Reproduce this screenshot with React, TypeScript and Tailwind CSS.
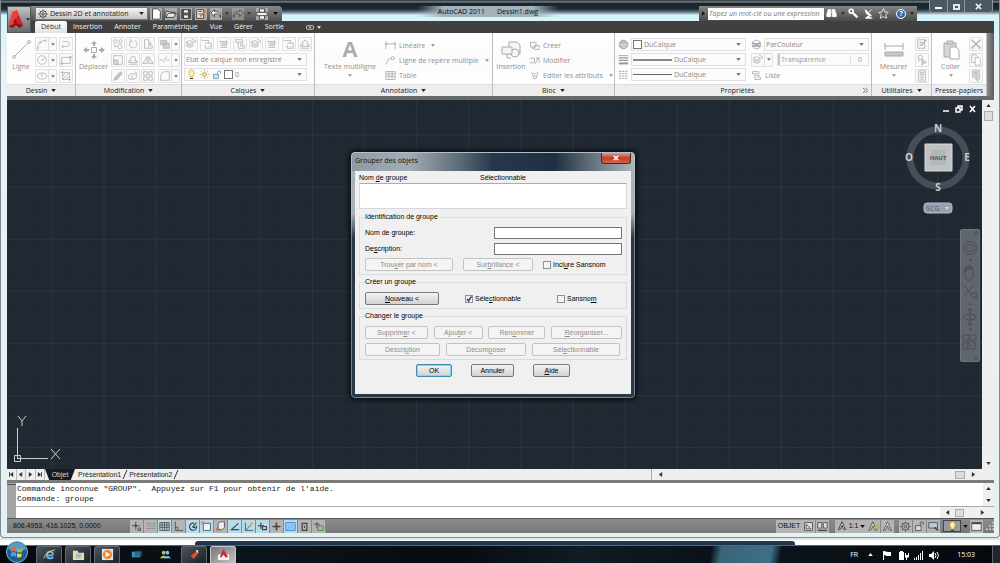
import { ReactNode } from "react";
import clsx from "clsx";

// Every glyph is drawn on a 14x14 grid
const glyphs: Record<string, ReactNode> = {
  arc: <><path d="M2 12C2 6 6 3 11 3" /><circle cx="2" cy="12" r="1" /><circle cx="11" cy="3" r="1" /><circle cx="5" cy="5" r="1" /></>,
  circle: <><circle cx="7" cy="7" r="5" /><path d="M7 7l3-2M6 7h2" /></>,
  ellipse: <><ellipse cx="7" cy="7" rx="5.500" ry="3.500" /><path d="M7 4v3M6 7h2" /></>,
  polyline: <><path d="M3 4h5a3 3 0 0 1 0 6H2" /><path d="M4 8L2 10l2 2" /></>,
  rect: <><path d="M2 4h10v7H2z" /><path d="M1 10h2v2H1zM11 3h2v2h-2z" /></>,
  hatch: <><path d="M3 3h8v8H3zM3 7l4-4M3 11l8-8M7 11l4-4" /><path d="M1 3h2M3 1v2M11 11h2M11 11v2" /></>,
  copy: <><circle cx="4" cy="4" r="2" /><circle cx="10" cy="4" r="2" /><circle cx="9" cy="10" r="2.500" /><path d="M3 7v3h3" /></>,
  rotate: <><path d="M4 4a4.500 4.500 0 1 0 5-1" /><path d="M4 1v3h3" /></>,
  stretch: <><path d="M3 2h5v10H3zM8 6l4 3v3H8" /><path d="M10 4v5" /></>,
  scale: <><path d="M2 2h10v10H2z" /><path d="M2 7h5v5H2z" fill="#d9d9d9" /></>,
  offset: <><path d="M2 10h10V8H9a3 3 0 1 0-4 0H2zM2 12h10" /></>,
  mirror: <><path d="M6 3v8H1zM8 3v8h5z" /></>,
  erase: <><path d="M2 12l4-1 6-7-2-2-6 6z" fill="#c4c4c4" /></>,
  explode: <><path d="M2 6l4-2 5 1v4l-4 2-5-1zM6 6v5M9 2l3 2" /></>,
  array: <><path d="M2 2h4v4H2zM8 2h4v4H8zM2 8h4v4H2zM8 8h4v4H8z" /></>,
  trim: <><path d="M2 3h7v5H2zM5 6h7v6H5z" fill="#d4d4d4" /></>,
  extend: <><path d="M1 7h4M9 7h4M5 10l4-7" /></>,
  fillet: <><path d="M2 12V7a5 5 0 0 1 5-5h5v10z" /></>,
  layers: <><path d="M1 5l4-2 5 2-4 2zM1 7l5 2 4-2M1 9l5 2 4-2" /><path d="M8 1l4 2v3" /></>,
  layers2: <><path d="M2 4h7l2 2H4zM3 7h8M3 9h8M3 11h8" /><path d="M10 2v3" /></>,
  layers3: <><path d="M1 3h8v3h3v6H5V8" /><path d="M5 6h4M10 9l-2 2" /></>,
  dimension: <><path d="M1 2v10M13 2v10M1 5h12M3 4L1 5l2 1M11 4l2 1-2 1" /></>,
  leader: <><path d="M1 12L5 5h3" /><circle cx="10" cy="4" r="2" /></>,
  table: <><path d="M1 2h12v10H1zM1 5h12M5 2v10M9 2v10M1 8h12" /></>,
  create: <><path d="M2 3h7v6H2zM7 7h6v5H7z" /><path d="M4 9v2h2" /></>,
  edit: <><path d="M1 4h6v6H1M8 11l1-2 3-6M9 4h4v6" /></>,
  attribute: <><path d="M2 2l3 3h4l3-3M4 5l2 6h3l2-6M6 8h4" /></>,
  sphere: <><circle cx="7" cy="7" r="5.500" fill="#bdbdbd" /><path d="M2 7h10M4 10h6" stroke="#eee" /></>,
  weights: <><path d="M1 2h12" /><path d="M1 5h12M1 8h12" strokeWidth="1.500" /><path d="M1 12h12" strokeWidth="2.500" /></>,
  dashes: <><path d="M1 3h12M1 6h12M1 9h12M1 12h12" strokeDasharray="3 1" /></>,
  globe: <><circle cx="7" cy="7" r="5.500" /><path d="M2 5c3 2 7 2 10 0M2 9h10" strokeWidth="2" /></>,
  list: <><path d="M2 2h8v3H5v7h7V9H7M2 2v3h3M7 7h4" /></>,
  select: <><path d="M2 2h8v10H2z" /><path d="M6 9l6-7M4 5h3M4 8h2" strokeWidth="1.500" /></>,
  pick: <><circle cx="5" cy="4" r="2.500" /><path d="M7 6l5 4-3 1-2 2zM2 8h3" fill="#d0d0d0" /></>,
  calc: <><path d="M3 1h8v12H3zM5 3h4v2H5zM5 7h4M5 9h4M5 11h4" /></>,
  cut: <><path d="M2 2l9 9M12 2l-9 9" strokeWidth="1.500" /><circle cx="3" cy="11" r="1.500" /><circle cx="11" cy="11" r="1.500" /></>,
  pages: <><path d="M2 1h5l2 2v7H2z" /><path d="M6 4h4l2 2v7H6z" fill="#fff" /></>,
  match: <><path d="M3 1h8v7H3zM5 3h4M5 5h4M8 8v3M5 9l4 4 3-4" fill="#ddd" /></>,
  file: <path d="M3 1h6l3 3v9H3z" fill="#fff" />,
  folder: <path d="M1 11V4h4l1 1h5v2M1 11l3-5h9l-3 5z" fill="#e8e8e8" />,
  save: <><path d="M2 2h10v10H2z" fill="#555" /><path d="M4 2h6v4H4zM4 8h6v4H4z" fill="#eee" /></>,
  saveAs: <><path d="M2 2h8v10H2z" fill="#eee" /><path d="M4 4h4M4 7h4" /><path d="M6 10l6-7" stroke="#c9812a" strokeWidth="2" /></>,
  undo: <path d="M5 2L1 6l4 4V7c4-1 6 0 7 4 1-5-2-7-7-7z" fill="#fff" />,
  redo: <path d="M9 2l4 4-4 4V7C5 6 3 7 2 11 1 6 4 4 9 4z" fill="#bbb" />,
  print: <><path d="M4 1h6v4H4zM4 8h6v5H4z" fill="#fff" /><path d="M1 5h12v4H1z" fill="#f2f2f2" /></>,
  gear: <><circle cx="7" cy="7" r="4.500" /><circle cx="7" cy="7" r="1.800" /><path d="M7 .5v2M7 11.500v2M.5 7h2M11.500 7h2M2.400 2.400l1.500 1.500M10.100 10.100l1.500 1.500M11.600 2.400l-1.500 1.500M3.900 10.100l-1.500 1.500" /></>,
  binoculars: <><path d="M3 2h3v9H1V8zM8 2h3l2 6v3H8z" fill="currentColor" /><path d="M6 5h2" /></>,
  key: <><circle cx="4" cy="4" r="2.500" strokeWidth="2" /><path d="M6 6l6 6" strokeWidth="3" /></>,
  dish: <><path d="M3 2c0 5 3 8 8 8zM7 6l4-4M7 10l-4 3h9" fill="currentColor" /></>,
  star: <path d="M7 1l2 4 4 .5-3 3 1 4.500-4-2-4 2 1-4.500-3-3L5 5z" />,
  snap: <><path d="M6 1v10M1 6h10M5 5h2v2H5z" /><path d="M9 9h3v3H9z" /></>,
  dots: <path d="M3 3v9M6 3v9M9 3v9M12 3v9" strokeDasharray="1 2" />,
  grid: <path d="M1 2h12v10H1zM1 5h12M1 8h12M4 2v10M7 2v10M10 2v10" />,
  ortho: <path d="M3 1v11h10M3 8h3v4" />,
  polar: <><path d="M12 6a4.500 4.500 0 1 1-3-3M7 8l5-6M7 8h4" strokeWidth="1.500" /></>,
  osnap: <><path d="M3 3h9v9H3z" fill="#eef6f9" /><path d="M1 1h3v3H1z" fill="#e8a080" stroke="#c77" /></>,
  osnap3: <><path d="M4 3l3-2h5v7l-3 3H4z" fill="#eee" /><path d="M2 9h3v3H2z" stroke="#b86a48" /></>,
  track: <path d="M12 3L3 11h10" strokeWidth="1.500" />,
  ducs: <><path d="M3 2v10h10M3 12l7-7" /><circle cx="11" cy="3" r="1.500" fill="#e3b04c" stroke="#e3b04c" /></>,
  dyn: <path d="M5 2v8M1 6h8M7 7h5v4H7z" strokeWidth="1.500" />,
  plus: <path d="M7 2v10M2 7h10" strokeWidth="2" />,
  fill: <><path d="M1 2h12v10H1z" fill="#9fd0ff" stroke="#2f7bd0" /><path d="M1 6h12M1 9h12M5 2v10M9 2v10" stroke="#5ba3e8" strokeDasharray="1 1" /></>,
  quick: <path d="M3 3h8M4 3v9h6V3M7 6v3" strokeWidth="1.500" />,
  cycle: <><path d="M5 1v8M1 4h8" /><path d="M6 6h7v6H6z" fill="#8fc58b" stroke="#3f7f3c" /></>,
  model: <><path d="M2 2h10v10H2z" fill="#ddd" /><path d="M4 4v6h6z" /></>,
  split: <><path d="M1 2h5v7H1zM8 2h5v7H8z" fill="#ddd" /><path d="M1 12h12" strokeWidth="1.500" /></>,
  anno: <path d="M7 1L2 12l3-1 2-5 2 5 3 1z" fill="#e6e6e6" />,
  annoOn: <><path d="M6 1L1 12l3-1 2-5 2 5 3 1z" fill="#e6e6e6" /><circle cx="11" cy="8" r="2" fill="#f0c24f" stroke="#b98a20" /></>,
  lock: <><path d="M2 6h7v6H2z" fill="#ddd" /><path d="M8 6V3a2 2 0 0 1 4 0v2" /></>,
  perf: <><path d="M1 2h11v7H1z" fill="#bcd" /><path d="M8 8l5 4" strokeWidth="2" /></>,
  bulb: <><path d="M7 1a4 4 0 0 1 2 7v2H5V8a4 4 0 0 1 2-7z" fill="#fff2a8" stroke="#c9a94c" /><path d="M5 12h4" /></>,
  sun: <><circle cx="7" cy="7" r="2.500" fill="#ffe9a8" /><path d="M7 1v2M7 11v2M1 7h2M11 7h2M3 3l1 1M10 10l1 1M11 3l-1 1M3 11l1-1" /></>,
  frame: <><path d="M1 2h12v10H1z" fill="#eee" /><path d="M1 3h12" strokeWidth="2" /></>,
};

const Glyph = ({ name, className }: { name: string; className?: string }) => (
  <svg viewBox="0 0 14 14" fill="none" stroke="currentColor" className={clsx("shrink-0", className ?? "size-[12px]")}>
    {glyphs[name]}
  </svg>
);

const Caret = ({ className }: { className?: string }) => (
  <svg viewBox="0 0 6 4" className={clsx("h-[3px] shrink-0", className ?? "w-[5px]")} fill="currentColor">
    <path d="M0 0h6L3 4z" />
  </svg>
);

const Tool = ({ name, split }: { name: string; split?: boolean }) => (
  <button aria-label={name} className="flex h-[14px] items-center rounded-[1px] border border-[#e0e0e0] bg-[#fafafa] text-[#b4b4b4]">
    <Glyph name={name} />
    {split && (
      <span className="flex h-full w-[8px] items-center justify-center border-l border-[#e0e0e0] text-[#777]">
        <Caret className="w-[4px]" />
      </span>
    )}
  </button>
);

const Panel = ({ title, caret = true, launcher, className, children }: { title: string; caret?: boolean; launcher?: boolean; className: string; children: ReactNode }) => (
  <section className={clsx("flex flex-col border-r border-[#bdbdbd]", className)}>
    <div className="flex h-[51px] items-start bg-gradient-to-b from-white via-[#fbfbfb] to-white pt-1">{children}</div>
    <div className="flex h-[12px] items-center border-t border-[#dcdcdc] bg-[#ededed] text-[#222]">
      <button className="flex flex-1 items-center justify-center gap-1">
        {title}
        {caret && <Caret />}
      </button>
      {launcher && (
        <button aria-label="Palette" className="px-[3px]">
          <svg viewBox="0 0 6 6" className="size-[5px]" fill="none" stroke="#666"><path d="M0 0l3 3-3 3M3 0l3 3-3 3" /></svg>
        </button>
      )}
    </div>
  </section>
);

const Combo = ({ label, value, className, before }: { label: string; value: string; className?: string; before?: ReactNode }) => (
  <div className={clsx("flex h-[13px] items-center gap-[2px] border border-[#e0e0e0] bg-[#fbfbfb] pr-1 pl-px", className)}>
    {before}
    <select aria-label={label} className="h-full min-w-0 flex-1 appearance-none bg-transparent text-[#888]">
      <option>{value}</option>
    </select>
    <Caret className="w-[5px] text-[#777]" />
  </div>
);

const RibbonLink = ({ name, text, caret }: { name: string; text: string; caret?: boolean }) => (
  <button className="flex h-[15px] items-center gap-[3px] text-[#8f8f8f]">
    <Glyph name={name} className="size-[11px] text-[#a8a8a8]" />
    {text}
    {caret && <Caret className="ml-[3px] w-[4px]" />}
  </button>
);

const BigTool = ({ text, caret, className, children }: { text: string; caret?: boolean; className: string; children: ReactNode }) => (
  <button className={clsx("flex flex-col items-center text-[#8f8f8f]", className)}>
    <span className="flex h-[25px] items-center justify-center">{children}</span>
    <span className="leading-[10px] whitespace-nowrap">{text}</span>
    {caret && <Caret className="mt-[2px] w-[4px]" />}
  </button>
);

const tabs = ["Début", "Insertion", "Annoter", "Paramétrique", "Vue", "Gérer", "Sortie"];

function TitleBar() {
  return (
    <div className="flex h-[33px]">
      <button aria-label="Menu de l'application" className="mt-[6px] flex w-[24px] items-center gap-[2px] border border-[#555] bg-gradient-to-b from-[#c2c2c2] to-[#6a6a6a]">
        <svg viewBox="0 0 18 24" className="h-[24px] w-[16px]">
          <path d="M5 3l5-2 7 17-4 3-3-6-4 1-1 5-4-2z" fill="#d3202a" />
          <path d="M5 3l5-2 1 6-5 9-1 5-4-2z" fill="#ee4038" />
          <path d="M8 10l2 4-4 2z" fill="#7d0f14" />
          <path d="M1 19l8-4 8 3-4 3-4-3-4 3z" fill="#8f1218" />
        </svg>
        <Caret className="w-[4px] text-[#222]" />
      </button>
      <div className="flex min-w-0 flex-1 flex-col">
        <div className="flex h-[21px] items-start">
          <div className="mt-[6px] flex h-[15px] items-center rounded-tr-sm bg-gradient-to-b from-[#8b8b8b] to-[#505050] pr-1 pl-[4px] text-white">
            <div className="flex h-[13px] w-[113px] items-center gap-[2px] border border-[#777] bg-gradient-to-b from-[#f4f4f4] to-[#c6c6c6] pr-[3px] pl-[2px] text-[#222]">
              <Glyph name="gear" className="size-[10px]" />
              <select aria-label="Espace de travail" className="min-w-0 flex-1 appearance-none bg-transparent">
                <option>Dessin 2D et annotation</option>
              </select>
              <Caret />
            </div>
            <div className="flex items-center gap-[3px] pl-[2px] text-[#333]">
              {["file", "folder", "save", "saveAs", "undo"].map((n) => (
                <button key={n} aria-label={n} className="flex size-[12px] bg-[#a9a9a9]"><Glyph name={n} /></button>
              ))}
              <Caret className="w-[4px]" />
              <button aria-label="redo" className="flex size-[12px] bg-[#a9a9a9] opacity-60"><Glyph name="redo" /></button>
              <Caret className="w-[4px]" />
              <button aria-label="print" className="ml-[2px] flex size-[12px] bg-[#a9a9a9]"><Glyph name="print" /></button>
              <Caret className="ml-[2px] w-[5px] text-black" />
            </div>
          </div>
          <p className="flex flex-1 justify-center pt-[6px] pr-[5px] leading-[11px] text-[#0a0d10]">
            <span className="flex gap-3 bg-[linear-gradient(90deg,transparent,#a3b3bc_18%,#a3b3bc_82%,transparent)] px-5">
              <span>AutoCAD 2011</span>
              <span>Dessin1.dwg</span>
            </span>
          </p>
          <div className="mt-[6px] flex h-[15px] w-[218px] items-center bg-gradient-to-b from-[#858585] to-[#4a4a4a] text-white">
            <svg viewBox="0 0 4 6" className="mx-[3px] h-[5px] w-[3px]"><path d="M0 0v6l4-3z" fill="#111" /></svg>
            <input aria-label="Recherche" placeholder="Tapez un mot-clé ou une expression" className="h-[12px] w-[116px] shrink-0 bg-white px-px italic placeholder:text-[#777]" />
            <div className="flex flex-1 items-center justify-between pr-[3px] pl-[2px]">
              <Glyph name="binoculars" className="size-[11px]" />
              <Caret className="w-[4px] text-[#222]" />
              <Glyph name="key" className="size-[11px]" />
              <Glyph name="dish" className="size-[11px]" />
              <Glyph name="star" className="size-[11px]" />
              <span className="ml-1 flex size-[10px] items-center justify-center rounded-full border border-white bg-[#3a68b0] font-bold">?</span>
              <Caret className="w-[4px] text-[#222]" />
            </div>
          </div>
          <div className="mr-[1px] ml-[12px] flex h-[13px] overflow-hidden rounded-b-sm border border-t-0 border-[#8d979c] text-white">
            <button aria-label="Réduire" className="flex w-[18px] items-end justify-center border-r border-[#8d979c] bg-[#4a5962] pb-[3px]"><span className="h-[2px] w-[7px] bg-white" /></button>
            <button aria-label="Agrandir" className="flex w-[17px] items-center justify-center border-r border-[#8d979c] bg-[#4a5962] pt-px"><span className="h-[6px] w-[7px] border-2 border-[#dfe6ea]" /></button>
            <button aria-label="Fermer" className="flex w-[27px] items-center justify-center bg-[#4a5962] pt-px">
              <svg viewBox="0 0 8 8" className="size-[7px]" stroke="#e6ecef" strokeWidth="2"><path d="M1 1l6 6M7 1L1 7" /></svg>
            </button>
          </div>
        </div>
        <nav className="flex h-[12px] items-center bg-[#404040] pl-[4px] text-[#f4f4f4]">
          {tabs.map((tab, i) => (
            <button
              key={tab}
              className={clsx("h-[12px] px-[6px]", i === 0 && "rounded-t-[2px] bg-gradient-to-b from-[#fdfdfd] to-[#e2e2e2] text-[#333]")}
            >
              {tab}
            </button>
          ))}
          <button aria-label="Ruban" className="ml-[16px] flex items-center gap-[3px]">
            <svg viewBox="0 0 9 5" className="h-[5px] w-[8px]"><rect x="0.500" y="0.500" width="8" height="4" rx="1" fill="none" stroke="#ddd" /><path d="M3 3l1.500-2L6 3z" fill="#ddd" /></svg>
            <Caret className="w-[4px]" />
          </button>
        </nav>
      </div>
    </div>
  );
}

function Ribbon() {
  return (
    <div className="flex h-[63px] bg-[#6e7072]">
      <Panel title="Dessin" className="w-[69px]">
        <BigTool text="Ligne" className="w-[28px]">
          <svg viewBox="0 0 20 20" className="size-[19px]" fill="#fff" stroke="#aaa"><path d="M2 18L18 2" /><circle cx="2" cy="18" r="1.500" /><circle cx="18" cy="2" r="1.500" /></svg>
        </BigTool>
        <div className="grid gap-[2px]"><Tool name="arc" split /><Tool name="circle" split /><Tool name="ellipse" split /></div>
        <div className="ml-[2px] grid gap-[2px]"><Tool name="polyline" /><Tool name="rect" /><Tool name="hatch" /></div>
      </Panel>
      <Panel title="Modification" className="w-[106px]">
        <BigTool text="Déplacer" className="w-[35px]">
          <svg viewBox="0 0 22 18" className="h-[18px] w-[22px]" fill="#aaa"><path d="M8.500 6.500h5v5h-5z" fill="none" stroke="#aaa" /><path d="M11 0l3 3h-2v2h-2V3H8zM11 18l3-3h-2v-2h-2v2H8zM0 9l4-3v2h2v2H4v2zM22 9l-4-3v2h-2v2h2v2z" /></svg>
        </BigTool>
        <div className="grid grid-cols-3 gap-x-[1px] gap-y-[2px]">
          {["copy", "rotate", "stretch", "scale", "offset", "mirror", "erase", "explode", "array"].map((n) => <Tool key={n} name={n} />)}
        </div>
        <div className="ml-[3px] grid gap-[2px]"><Tool name="trim" split /><Tool name="extend" split /><Tool name="fillet" split /></div>
      </Panel>
      <Panel title="Calques" className="w-[133px]">
        <div className="flex w-full flex-col gap-[2px] px-[2px]">
          <div className="flex justify-between">
            {["layers", "layers3", "layers2", "list", "layers", "layers2", "layers3", "offset"].map((n, i) => <Tool key={i} name={n} />)}
          </div>
          <Combo label="Etat de calque" value="Etat de calque non enregistré" className="mr-[5px]" />
          <Combo
            label="Calque"
            value="0"
            className="mr-[5px]"
            before={<>
              <Glyph name="bulb" className="size-[11px]" />
              <Glyph name="sun" className="size-[11px] text-[#b89a50]" />
              <Glyph name="lock" className="size-[10px] text-[#4f94a8]" />
              <span className="size-[9px] shrink-0 border border-[#777] bg-white" />
            </>}
          />
        </div>
      </Panel>
      <Panel title="Annotation" className="w-[178px]">
        <BigTool text="Texte multiligne" caret className="w-[70px]">
          <span className="font-['Liberation_Sans',sans-serif] text-[22px] leading-[24px] font-bold text-[#aaa]">A</span>
        </BigTool>
        <div className="flex flex-col pt-px">
          <RibbonLink name="dimension" text="Linéaire" caret />
          <RibbonLink name="leader" text="Ligne de repère multiple" caret />
          <RibbonLink name="table" text="Table" />
        </div>
      </Panel>
      <Panel title="Bloc" className="w-[122px]">
        <BigTool text="Insertion" className="w-[36px]">
          <svg viewBox="0 0 20 20" className="size-[20px]" fill="#f6f6f6" stroke="#aaa"><path d="M8 2h8l3 3v9H8z" /><circle cx="14" cy="13" r="4" /><path d="M1 7h10v7H1zM6 14v4h4" /></svg>
        </BigTool>
        <div className="flex flex-col pt-px">
          <RibbonLink name="create" text="Créer" />
          <RibbonLink name="edit" text="Modifier" />
          <RibbonLink name="attribute" text="Editer les attributs" caret />
        </div>
      </Panel>
      <Panel title="Propriétés" caret={false} launcher className="min-w-0 flex-1">
        <div className="grid w-full grid-cols-[128px_1fr] gap-x-[5px] pt-px pr-[2px] pl-[3px]">
          <div className="flex flex-col gap-[2px] text-[#999]">
            <div className="flex items-center gap-[2px]">
              <Glyph name="sphere" className="size-[11px]" />
              <Combo label="Couleur" value="DuCalque" className="flex-1" before={<span className="size-[9px] shrink-0 border border-[#777] bg-white" />} />
            </div>
            <div className="flex items-center gap-[2px]">
              <Glyph name="weights" className="size-[11px]" />
              <Combo label="Epaisseur" value="DuCalque" className="flex-1" before={<span className="h-[2px] w-[39px] shrink-0 bg-[#888]" />} />
            </div>
            <div className="flex items-center gap-[2px]">
              <Glyph name="dashes" className="size-[11px]" />
              <Combo label="Type de ligne" value="DuCalque" className="flex-1" before={<span className="h-px w-[39px] shrink-0 bg-[#666]" />} />
            </div>
          </div>
          <div className="flex flex-col gap-[2px] text-[#999]">
            <div className="flex items-center gap-[2px]">
              <Glyph name="globe" className="size-[11px]" />
              <Combo label="Style de tracé" value="ParCouleur" className="flex-1" />
            </div>
            <div className="flex h-[13px] items-center gap-[4px]">
              <Tool name="layers" split />
              <div className="flex h-[13px] flex-1 items-center justify-between border border-[#e0e0e0] pr-[6px]">
                <span className="flex items-center gap-px"><span className="h-[11px] w-[2px] bg-[#c6c6c6]" />Transparence</span>
                <span className="border-l border-[#e0e0e0] pl-[7px]">0</span>
              </div>
            </div>
            <RibbonLink name="list" text="Liste" />
          </div>
        </div>
      </Panel>
      <Panel title="Utilitaires" className="w-[60px]">
        <BigTool text="Mesurer" caret className="w-[43px]">
          <svg viewBox="0 0 20 16" className="h-[16px] w-[20px]" stroke="#aaa" fill="#c8c8c8"><path d="M1 1v7M19 1v7M1 4h18" /><path d="M1 10h18v4H1z" /></svg>
        </BigTool>
        <div className="grid gap-[2px]"><Tool name="select" /><Tool name="pick" /><Tool name="calc" /></div>
      </Panel>
      <Panel title="Presse-papiers" caret={false} className="w-[55px]">
        <BigTool text="Coller" caret className="w-[37px]">
          <svg viewBox="0 0 18 20" className="h-[20px] w-[18px]" stroke="#aaa" fill="#d6d6d6"><path d="M2 3h12v14H2z" /><path d="M5 1h6v3H5z" /><path d="M8 7h6l3 3v9H8z" fill="#fff" /></svg>
        </BigTool>
        <div className="grid gap-[2px]"><Tool name="cut" /><Tool name="pages" /><Tool name="match" /></div>
      </Panel>
      <div className="w-[7px] bg-gradient-to-r from-[#8e8e8e] to-[#5c5c5c]" />
    </div>
  );
}

const Key = ({ children }: { children: string }) => <u className="underline-offset-1">{children}</u>;

type DialogButtonProps = { className: string; disabled?: boolean; primary?: boolean; children: ReactNode };

const DialogButton = ({ className, disabled, primary, children }: DialogButtonProps) => (
  <button
    disabled={disabled}
    className={clsx(
      "h-[13px] rounded-[2px] border leading-[10px]",
      disabled ? "border-[#c3c3c3] bg-[#f4f4f4] text-[#8c8c8c]" : "bg-gradient-to-b from-[#f4f4f4] to-[#d2d2d2] text-black",
      !disabled && (primary ? "border-[#3c8fb8] shadow-[inset_0_0_0_1px_#7fd6f5]" : "border-[#777]"),
      className
    )}
  >
    {children}
  </button>
);

const Check = ({ id, checked, className, children }: { id: string; checked?: boolean; className?: string; children: ReactNode }) => (
  <div className={clsx("flex items-center gap-[2px]", className)}>
    <span className="relative flex">
      <input id={id} type="checkbox" defaultChecked={checked} className="peer size-[8px] appearance-none border border-[#8e8f8f] bg-[#f4f4f4]" />
      <svg viewBox="0 0 8 8" className="pointer-events-none absolute inset-0 hidden size-[8px] peer-checked:block" fill="none" stroke="#27408b" strokeWidth="1.500"><path d="M2 4l1.500 2L6.500 1.500" /></svg>
    </span>
    <label htmlFor={id}>{children}</label>
  </div>
);

function GroupDialog() {
  return (
    <div
      role="dialog"
      aria-labelledby="dialog-title"
      className="absolute top-[151px] left-[350px] w-[286px] rounded-[5px] border border-[#11161c] bg-gradient-to-b from-[#a9b0b6] from-25% to-[#2b3947] to-35% p-[4px] pt-0 font-['Liberation_Sans',sans-serif] text-black shadow-[0_0_4px_1px_rgba(0,0,0,0.7),inset_0_0_0_1px_rgba(190,205,220,0.5)]"
    >
      <div className="-mx-[3px] mt-px flex h-[18px] items-start justify-between rounded-t-[4px] bg-[linear-gradient(90deg,#8f9aa3,#a3adb5_20%,#5d6b78_38%,#25384b_50%,#1f3042_72%,#7e8992_90%,#aeb5ba)] px-[3px]">
        <h1 id="dialog-title" className="pt-[3px] font-['Open_Sans',sans-serif] leading-[10px] text-[#111]">Grouper des objets</h1>
        <button aria-label="Fermer" className="flex h-[11px] w-[30px] items-center justify-center rounded-b-[3px] border border-t-0 border-[#5c1f1a] bg-gradient-to-b from-[#e0998c] via-[#c33b26] to-[#d3634a]">
          <svg viewBox="0 0 8 8" className="size-[6px]" stroke="#fff" strokeWidth="2"><path d="M1 1l6 6M7 1L1 7" /></svg>
        </button>
      </div>
      <div className="h-[223px] bg-[#f0f0f0] px-[4px] pt-px">
        <div className="flex h-[11px] items-center leading-[9px]">
          <span className="w-[121px]">Nom <Key>d</Key>e groupe</span>
          <span>Sélectionnable</span>
        </div>
        <div className="h-[26px] border border-[#d4d8dc] border-t-[#a8adb3] bg-white" />
        <fieldset className="mt-[3px] h-[63px] border border-[#dcdcdc] pr-[4px] pl-[5px]">
          <legend className="h-[10px] pr-px leading-[10px]">Identification de groupe</legend>
          <div className="mt-[5px] flex h-[12px] items-center justify-between">
            <label htmlFor="group-name">Nom de groupe:</label>
            <input id="group-name" className="h-[12px] w-[128px] border border-[#777] bg-white px-[2px]" />
          </div>
          <div className="mt-[4px] flex h-[12px] items-center justify-between">
            <label htmlFor="group-desc">De<Key>s</Key>cription:</label>
            <input id="group-desc" className="h-[12px] w-[128px] border border-[#777] bg-white px-[2px]" />
          </div>
          <div className="mt-[3px] flex items-center gap-[10px]">
            <DialogButton disabled className="w-[88px]">Trou<Key>v</Key>er par nom &lt;</DialogButton>
            <DialogButton disabled className="w-[70px]">Sur<Key>b</Key>rillance &lt;</DialogButton>
            <Check id="include">Incl<Key>u</Key>re Sansnom</Check>
          </div>
        </fieldset>
        <fieldset className="mt-[2px] h-[32px] border border-[#dcdcdc] pr-[4px] pl-[5px]">
          <legend className="h-[10px] pr-px leading-[10px]">Créer un groupe</legend>
          <div className="mt-[5px] flex items-center">
            <DialogButton className="w-[74px]"><Key>N</Key>ouveau &lt;</DialogButton>
            <Check id="selectable" checked className="ml-[26px] w-[92px]">Séle<Key>c</Key>tionnable</Check>
            <Check id="unnamed">Sansno<Key>m</Key></Check>
          </div>
        </fieldset>
        <fieldset className="mt-[2px] h-[49px] border border-[#dcdcdc] pr-[4px] pl-[5px]">
          <legend className="h-[10px] pr-px leading-[10px]">Changer le groupe</legend>
          <div className="mt-[5px] flex justify-between">
            <DialogButton disabled className="w-[63px]">Supprim<Key>e</Key>r &lt;</DialogButton>
            <DialogButton disabled className="w-[49px]">Ajou<Key>t</Key>er &lt;</DialogButton>
            <DialogButton disabled className="w-[57px]">Ren<Key>o</Key>mmer</DialogButton>
            <DialogButton disabled className="w-[71px]"><Key>R</Key>éorganiser...</DialogButton>
          </div>
          <div className="mt-[4px] flex gap-[6px]">
            <DialogButton disabled className="w-[75px]">Descri<Key>p</Key>tion</DialogButton>
            <DialogButton disabled className="w-[80px]">Décom<Key>p</Key>oser</DialogButton>
            <DialogButton disabled className="w-[88px]">Sél<Key>e</Key>ctionnable</DialogButton>
          </div>
        </fieldset>
        <div className="mt-[4px] flex justify-center gap-[19px]">
          <DialogButton primary className="w-[36px]">OK</DialogButton>
          <DialogButton className="w-[43px]">Annuler</DialogButton>
          <DialogButton className="w-[37px]"><Key>A</Key>ide</DialogButton>
        </div>
      </div>
    </div>
  );
}

function ViewTools() {
  return (
    <>
      <div className="absolute top-[5px] right-[6px] flex items-center">
        <svg viewBox="0 0 34 8" className="h-[8px] w-[34px]" fill="none" stroke="#fff" strokeWidth="1.500"><path d="M1 6h6M14 3h4v4h-4zM16 3V1h4v4h-2M28 1l5 6M33 1l-5 6" /></svg>
      </div>
      <svg viewBox="0 0 70 92" className="absolute top-[22px] right-[9px] h-[92px] w-[70px]" fontFamily="Open Sans" fontWeight="700" textAnchor="middle" fill="#c9ced3">
        <circle cx="35" cy="36" r="28" fill="none" stroke="#474e58" strokeWidth="7" />
        <path d="M22 22h27v27H22z" fill="#bfc2c4" stroke="#d9dbdc" />
        <path d="M28 28h15v15H28z" fill="#b2b6b9" />
        <text x="35" y="38" fontSize="6" fill="#4a525b">HAUT</text>
        <text x="35" y="10" fontSize="10">N</text>
        <text x="35" y="69" fontSize="10">S</text>
        <text x="6" y="39" fontSize="10">O</text>
        <text x="64" y="39" fontSize="10">E</text>
        <rect x="21" y="81" width="28" height="10" rx="3" fill="#9b9fb0" stroke="#b9bcc9" />
        <text x="30" y="89" fontSize="7" fontWeight="400" fill="#59606e">SCG</text>
        <path d="M42 85h4l-2 3z" fill="#d9dbe4" />
      </svg>
      <svg viewBox="0 0 20 133" className="absolute top-[129px] right-[2px] h-[133px] w-[20px]" fill="none" stroke="#484e57">
        <rect x="0.500" y="0.500" width="19" height="132" rx="1.500" fill="#61666e" stroke="#70757c" />
        <circle cx="16" cy="4" r="1.500" />
        <circle cx="10" cy="19" r="6.500" /><circle cx="10" cy="19" r="3.500" />
        <path d="M5 46l-1-6 2 3V37l2 4V36l2 5V36l2 5 1-3v8l-2 5H7zM4 56l10 13M14 56L4 67" />
        <circle cx="14" cy="66" r="2.500" fill="#61666e" /><path d="M16 68l2 3" />
        <ellipse cx="10" cy="88" rx="6" ry="3" /><path d="M10 80v16M8 82l2-3 2 3M8 94l2 3 2-3" />
        <path d="M3 106h6v5H3zM10 106h6v5h-6zM3 113h12v7H3zM7 114l4 2-4 3z" />
        <path d="M9 31h3l-1 1zM9 75h3l-1 1zM9 100h3l-1 1z" fill="#333a44" />
        <circle cx="16" cy="129" r="1.500" />
      </svg>
    </>
  );
}

function Canvas() {
  return (
    <div className="flex min-h-0 flex-1">
      <div className="relative flex-1 overflow-hidden bg-[#202832]">
        <svg className="absolute inset-0 size-full">
          <defs>
            <pattern id="minor" width="10.420" height="10.420" patternUnits="userSpaceOnUse" x="2.500" y="3.500"><path d="M0 0H11M0 0V11" stroke="#252d38" strokeWidth="1" fill="none" /></pattern>
            <pattern id="major" width="52.100" height="52.100" patternUnits="userSpaceOnUse" x="44.500" y="34.500"><path d="M0 .5H53M.5 0V53" stroke="#2b333f" strokeWidth="1" fill="none" /></pattern>
          </defs>
          <rect width="100%" height="100%" fill="url(#minor)" />
          <rect width="100%" height="100%" fill="url(#major)" />
        </svg>
        <svg viewBox="0 0 56 52" className="absolute bottom-[4px] left-[5px] h-[52px] w-[56px]" fill="none" stroke="#c9ced3">
          <path d="M5.500 15v31M5 45.500h31M2.500 42.500h6v6h-6zM6 3l4 5 4-5M10 8v5M39 36l9 10M48 36l-9 10" />
        </svg>
        <ViewTools />
      </div>
      <div className="flex w-[12px] flex-col items-center justify-between bg-[#efefef] py-[4px] text-[#333]">
        <div className="flex flex-col items-center gap-[4px]">
          <Caret className="w-[5px] rotate-180" />
          <span className="h-[10px] w-[9px] border border-[#aaa] bg-[#ddd]" />
        </div>
        <Caret />
      </div>
    </div>
  );
}

const Side = ({ flip, bar }: { flip?: boolean; bar?: boolean }) => (
  <svg viewBox="0 0 6 6" className={clsx("size-[5px]", flip && "rotate-180")} fill="#333">
    <path d="M5 0v6L1 3z" />
    {bar && <path d="M0 0h1v6H0z" />}
  </svg>
);

const Slash = () => (
  <svg viewBox="0 0 8 11" className="h-[11px] w-[8px]" stroke="#333"><path d="M2 10L6 1" /></svg>
);

function LayoutTabs() {
  return (
    <div className="flex h-[11px] items-stretch bg-[#efefef] font-['Liberation_Sans',sans-serif] text-[#222]">
      <div className="flex w-[38px] items-center">
        {["Premier", "Précédent", "Suivant", "Dernier"].map((n, i) => (
          <button key={n} aria-label={n} className="flex h-full flex-1 items-center justify-center border-r border-[#bbb]">
            <Side flip={i > 1} bar={i === 0 || i === 3} />
          </button>
        ))}
      </div>
      <button className="w-[30px] bg-[#161b22] text-[#d5d9dd] [clip-path:polygon(0_0,100%_0,86%_100%,14%_100%)]">Objet</button>
      <button className="pl-[3px]">Présentation1</button>
      <Slash />
      <button>Présentation2</button>
      <Slash />
      <div className="ml-auto flex w-[343px] items-center border-l border-[#aaa] pr-[18px] pl-[6px]">
        <Side />
        <span className="ml-auto h-[8px] w-[10px] border border-[#aaa] bg-[#ddd]" />
        <span className="ml-[6px] flex"><Side flip /></span>
      </div>
    </div>
  );
}

function CommandLine() {
  return (
    <div className="flex h-[39px] border-y border-t-[3px] border-t-[#7b7b7b] border-b-[#555] bg-white">
      <div className="w-[9px] bg-[#a3a3a3] pt-px"><div className="h-px bg-[#555]" /></div>
      <div className="flex min-w-0 flex-1 flex-col font-['Liberation_Mono',monospace] text-[8px] leading-[10px] text-[#222]">
        <div className="flex h-[24px] border-b border-[#aaa]">
          <div className="flex-1 pt-px pl-px">
            <p>Commande inconnue "GROUP".&nbsp; Appuyez sur F1 pour obtenir de l'aide.</p>
            <p>Commande: groupe</p>
          </div>
          <div className="flex w-[11px] flex-col items-center justify-between bg-[#efefef] py-[4px]"><Caret className="w-[5px] rotate-180" /><Caret /></div>
        </div>
        <div className="flex flex-1">
          <input aria-label="Commande" className="min-w-0 flex-1 px-px outline-none" />
          <div className="flex w-[54px] items-center gap-[5px] bg-[#efefef] pl-[5px]">
            <Side /><span className="h-[8px] w-[9px] border border-[#aaa] bg-[#ddd]" /><span className="ml-[11px] flex"><Side flip /></span>
          </div>
        </div>
      </div>
    </div>
  );
}

const modes: [string, boolean][] = [
  ["snap", false], ["dots", false], ["grid", true], ["ortho", false], ["polar", true], ["osnap", true], ["osnap3", false],
  ["track", true], ["ducs", true], ["dyn", true], ["plus", false], ["fill", true], ["quick", false], ["cycle", false],
];

const StatusButton = ({ name, on }: { name: string; on?: boolean }) => (
  <button aria-label={name} className={clsx("flex h-[13px] w-[14px] items-center justify-center border-r border-[#888] text-[#444]", on ? "bg-[#b5dce8]" : "bg-[#b4b4b4]")}>
    <Glyph name={name} className="size-[11px]" />
  </button>
);

function StatusBar() {
  return (
    <div className="flex h-[14px] items-center bg-gradient-to-b from-[#8c8c8c] to-[#787878] font-['Liberation_Sans',sans-serif] text-[#111]">
      <span className="w-[123px] pl-[6px]">806.4953, 416.1025, 0.0000</span>
      {modes.map(([n, on]) => <StatusButton key={n} name={n} on={on} />)}
      <div className="ml-auto flex items-center">
        <button className="h-[13px] w-[26px] bg-[#b4b4b4]">OBJET</button>
        <StatusButton name="model" />
        <StatusButton name="split" />
        <button className="ml-[5px] flex h-[13px] w-[32px] items-center justify-center gap-[2px] bg-[#b4b4b4]"><Glyph name="anno" className="size-[10px]" />1:1<Caret /></button>
        <StatusButton name="annoOn" />
        <StatusButton name="anno" />
        <span className="w-[4px]" />
        <StatusButton name="gear" />
        <StatusButton name="lock" />
        <StatusButton name="perf" />
        <button aria-label="Isoler" className="ml-[2px] flex h-[12px] w-[18px] items-center justify-center border border-[#444] bg-[#999]"><Glyph name="bulb" className="size-[11px]" /></button>
        <Caret className="mx-[2px] w-[5px]" />
        <StatusButton name="frame" />
        <svg viewBox="0 0 10 10" className="ml-[2px] size-[8px]" fill="#ddd"><path d="M8 0h2v2H8zM8 4h2v2H8zM4 4h2v2H4zM8 8h2v2H8zM4 8h2v2H4zM0 8h2v2H0z" /></svg>
      </div>
    </div>
  );
}

const TaskButton = ({ label, active, plain, children }: { label: string; active?: boolean; plain?: boolean; children: ReactNode }) => (
  <button
    aria-label={label}
    className={clsx(
      "flex h-[18px] w-[26px] items-center justify-center rounded-[2px]",
      !plain && "border",
      active ? "border-[#c9c9c9] bg-gradient-to-br from-[#777] to-[#c5c5c5]" : !plain && "border-[#5f6870] bg-gradient-to-br from-[#4c545c] to-[#1b2128]"
    )}
  >
    <svg viewBox="0 0 14 14" className="size-[13px]">{children}</svg>
  </button>
);

function Taskbar() {
  return (
    <footer className="flex h-[18px] items-center border-t border-[#59656f] bg-[linear-gradient(100deg,#05080b,#0c141b_25%,#060b10_45%,#111b25_58%,#0a1119_71%,#3a6478_72%,#3f6f86_77%,#0b141b_78%,#05080b)] text-white">
      <button aria-label="Démarrer" className="-mt-[5px] ml-[6px]">
        <svg viewBox="0 0 22 22" className="size-[22px]">
          <circle cx="11" cy="11" r="10.500" fill="#1d5d8f" stroke="#7fb4d8" />
          <path d="M2 8a9.500 9.500 0 0 1 18 0q-9 5-18 0z" fill="#8fc3e3" opacity="0.600" />
          <path d="M5 7q3-2 5 0v4q-2-2-5 0z" fill="#ea6a36" /><path d="M11 7q3 2 6 0l-1 4q-3 1-5 0z" fill="#8cc24a" />
          <path d="M5 12q3-2 5 0v4q-2-2-5 0z" fill="#47a4e0" /><path d="M11 12q3 2 5 0l-1 4q-2 1-4 0z" fill="#f5ce3e" />
        </svg>
      </button>
      <div className="ml-[8px] flex gap-[3px]">
        <TaskButton label="Internet Explorer"><path d="M11 8H4a3.500 3.500 0 1 1 7-1M4 9q3 4 7 1" fill="none" stroke="#5fbdf0" strokeWidth="2" /><path d="M1 11Q3 4 13 2" fill="none" stroke="#f1cf5c" /></TaskButton>
        <TaskButton label="Explorateur"><path d="M1 3h5l1 2h6v8H1z" fill="#f0dc94" /><path d="M4 6h6v5H4z" fill="#8fc6dd" /></TaskButton>
        <TaskButton label="Lecteur"><path d="M1 1h12v12H1z" fill="#dce9f2" /><circle cx="7" cy="7" r="5" fill="#f08a24" /><path d="M5 4v6l5-3z" fill="#fff" /></TaskButton>
        <TaskButton label="Bureau" plain><path d="M2 4h9v6H2z" fill="#3f93b8" /><path d="M5 3h8v6H5z" fill="#1c5d80" opacity=".7" /></TaskButton>
        <TaskButton label="Messagerie" plain><circle cx="5" cy="5" r="2" fill="#9ed06a" /><circle cx="9" cy="5" r="2" fill="#7cc4ea" /><path d="M1 11q4-6 8 0z" fill="#9ed06a" /><path d="M6 11q3-5 7 0z" fill="#7cc4ea" /></TaskButton>
        <TaskButton label="Outil"><path d="M3 8l7-5 1 3-5 6z" fill="#d9542b" /><path d="M8 3l3-1v4z" fill="#f3d5c5" /></TaskButton>
        <TaskButton label="AutoCAD" active><path d="M1 7h12v6H1z" fill="#f4f4f4" /><path d="M7 1l5 9H9L7 7l-2 3H3z" fill="#d3202a" /></TaskButton>
      </div>
      <div className="ml-auto flex items-center gap-[6px] pr-[17px]">
        <span className="mr-[4px]">FR</span>
        <Caret className="w-[5px] rotate-180" />
        <svg viewBox="0 0 60 10" className="h-[10px] w-[60px]" fill="#fff">
          <path d="M4 1h1v9H4zM5 1l4 1h3v4H8L5 5zM20 2h5v8h-5zM21 1h3v1h-3zM26 3h1v2h2V3h1v4l-2 1v2h-1V8l-1-1zM35 8h1v2h-1zM37 7h1v3h-1zM39 5h1v5h-1zM41 3h1v7h-1zM43 1h1v9h-1zM50 4h2l3-3v9l-3-3h-2z" />
          <path d="M56 3q2 2.500 0 5M58 2q3 3.500 0 7" fill="none" stroke="#fff" />
        </svg>
        <time className="ml-[12px]">15:03</time>
      </div>
      <span className="h-full w-[8px] border-l border-[#5d666e] bg-[#20262c]" />
    </footer>
  );
}

export default function App() {
  return (
    <div className="relative flex h-screen flex-col overflow-hidden bg-white font-['Open_Sans',sans-serif] text-[7px] leading-[10px]">
      <div className="flex min-h-0 flex-1 flex-col rounded-b-[4px] border-x border-b border-[#808a90] bg-[linear-gradient(180deg,#3a444b_1px,#8d989e_2px,#1b242c_3px,#1e2931_9px,#5f7684_12px,#d5f1fa_15px,#d4f4fa_21px,#e9f2f5_60px,#e4f1f2)] pr-[5px] pb-[4px] pl-[6px]">
        <TitleBar />
        <Ribbon />
        <div className="h-[4px] shrink-0 bg-[#67696b]" />
        <Canvas />
        <LayoutTabs />
        <CommandLine />
        <StatusBar />
      </div>
      <div className="flex h-[7px] shrink-0 items-end border-t-2 border-[#dfe6e4] bg-white">
        <div className="ml-[195px] h-[4px] w-[60%] rounded-t-[3px] bg-[#1d3650]" />
      </div>
      <Taskbar />
      <GroupDialog />
    </div>
  );
}
